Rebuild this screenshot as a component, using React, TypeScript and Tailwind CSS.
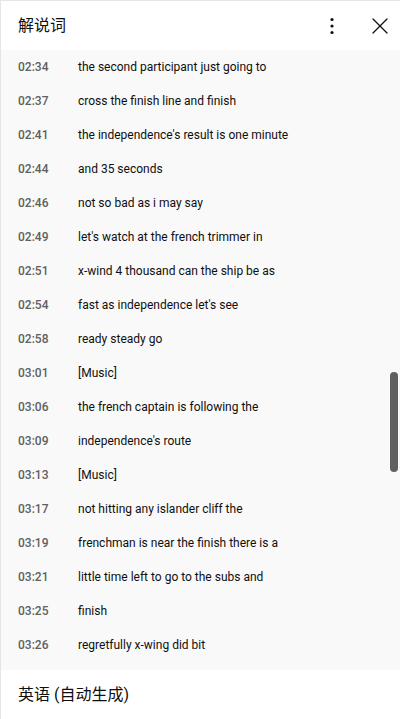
import { X } from "lucide-react"

const lines: [string, string][] = [
  ["02:34", "the second participant just going to"],
  ["02:37", "cross the finish line and finish"],
  ["02:41", "the independence's result is one minute"],
  ["02:44", "and 35 seconds"],
  ["02:46", "not so bad as i may say"],
  ["02:49", "let's watch at the french trimmer in"],
  ["02:51", "x-wind 4 thousand can the ship be as"],
  ["02:54", "fast as independence let's see"],
  ["02:58", "ready steady go"],
  ["03:01", "[Music]"],
  ["03:06", "the french captain is following the"],
  ["03:09", "independence's route"],
  ["03:13", "[Music]"],
  ["03:17", "not hitting any islander cliff the"],
  ["03:19", "frenchman is near the finish there is a"],
  ["03:21", "little time left to go to the subs and"],
  ["03:25", "finish"],
  ["03:26", "regretfully x-wing did bit"],
]

function App() {
  return (
    <div
      className="w-[400px] h-[719px] flex flex-col bg-white border-l border-t border-[#e5e5e5] overflow-hidden"
      style={{ fontFamily: "Roboto, 'Noto Sans CJK SC', sans-serif" }}
    >
      {/* header */}
      <div className="h-[49px] flex items-center pl-[17px] pr-[6px] shrink-0">
        <span className="text-[16px] text-[#0f0f0f] flex-1">解说词</span>
        <div className="w-[40px] h-[40px] flex items-center justify-center mr-[14px]">
          <svg width="24" height="24" viewBox="0 0 24 24" fill="#0f0f0f">
            <circle cx="12" cy="5.5" r="1.6" />
            <circle cx="12" cy="12" r="1.6" />
            <circle cx="12" cy="18.5" r="1.6" />
          </svg>
        </div>
        <div className="w-[28px] h-[28px] flex items-center justify-center">
          <X className="w-[28px] h-[28px] text-[#0f0f0f]" strokeWidth={1.1} />
        </div>
      </div>

      {/* transcript */}
      <div className="relative h-[620px] bg-[#f9f9f9] overflow-hidden shrink-0">
        <div className="flex flex-col">
          {lines.map(([t, s]) => (
            <div key={t} className="h-[34px] flex items-center pl-[17px]">
              <span className="w-[60px] text-[12px] font-medium text-[#606060]">{t}</span>
              <span className="text-[12px] text-[#0f0f0f]">{s}</span>
            </div>
          ))}
        </div>
        <div className="absolute left-[389px] top-[322px] w-[8px] h-[100px] rounded-full bg-[#606060]" />
      </div>

      {/* footer */}
      <div className="flex-1 flex items-center pl-[17px]">
        <span className="text-[16px] text-[#0f0f0f]">英语 (自动生成)</span>
      </div>
    </div>
  )
}

export default App
